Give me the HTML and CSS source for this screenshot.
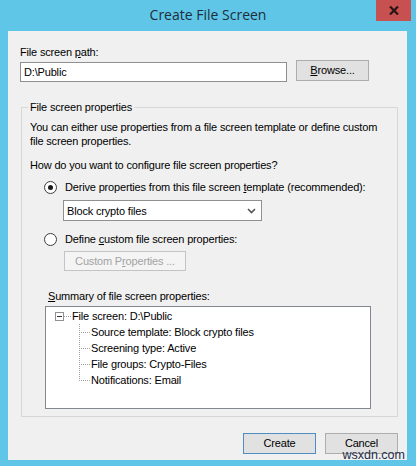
FILE: index.html
```html
<!DOCTYPE html>
<html>
<head>
<meta charset="utf-8">
<link rel="stylesheet" href="styles.css">
</head>
<body>
<div class="window">
  <div class="titlebar">
    <span></span>
    <span class="title">Create File Screen</span>
    <span class="close"><svg width="10" height="9" viewBox="0 0 10 9"><path d="M1 0.5 L9 8.5 M9 0.5 L1 8.5" stroke="#2a1515" stroke-width="2.2" fill="none"/></svg></span>
  </div>
  <div class="client">
    <div class="label">File screen <u>p</u>ath:</div>
    <div class="path-row">
      <div class="input">D:\Public</div>
      <div class="btn"><u>B</u>rowse...</div>
    </div>
    <fieldset class="group">
      <legend>File screen properties</legend>
      <div class="text">You can either use properties from a file screen template or define custom<br>file screen properties.</div>
      <div class="text question">How do you want to configure file screen properties?</div>
      <div class="radio-row first">
        <span class="radio checked"></span>
        <span>Derive properties from this file screen <u>t</u>emplate (recommended):</span>
      </div>
      <div class="combo">
        <span>Block crypto files</span>
        <svg class="chev" width="9" height="6" viewBox="0 0 9 6"><path d="M1 1 L4.5 4.5 L8 1" stroke="#555" stroke-width="1.6" fill="none"/></svg>
      </div>
      <div class="radio-row second">
        <span class="radio"></span>
        <span>Define <u>c</u>ustom file screen properties:</span>
      </div>
      <div class="btn disabled custom">Custom P<u>r</u>operties ...</div>
      <div class="label summary"><u>S</u>ummary of file screen properties:</div>
      <div class="tree">
        <div class="root">
          <span class="expander"><span class="minus"></span></span>
          <span class="root-dots"></span>
          <span>File screen: D:\Public</span>
        </div>
        <ul class="children">
          <li><span class="branch"></span><span>Source template: Block crypto files</span></li>
          <li><span class="branch"></span><span>Screening type: Active</span></li>
          <li><span class="branch"></span><span>File groups: Crypto-Files</span></li>
          <li class="last"><span class="branch"></span><span>Notifications: Email</span></li>
        </ul>
      </div>
    </fieldset>
    <div class="actions">
      <div class="btn default">Create</div>
      <div class="btn">Cancel</div>
    </div>
  </div>
  <div class="watermark">wsxdn.com</div>
</div>
</body>
</html>
```
FILE: styles.css
```css
html, body {
  margin: 0;
  padding: 0;
}
body {
  font-family: "Liberation Sans", Arial, sans-serif;
  font-size: 11px;
  letter-spacing: -0.17px;
  color: #000;
}
.window {
  position: relative;
  width: 416px;
  height: 466px;
  background: #5fc6e8;
  display: flex;
  flex-direction: column;
  box-sizing: border-box;
  overflow: hidden;
}
.titlebar {
  height: 31px;
  flex: none;
  display: grid;
  grid-template-columns: 1fr auto 1fr;
}
.title {
  font-family: "Open Sans", "Noto Sans", sans-serif;
  font-size: 14px;
  letter-spacing: 0;
  line-height: 30px;
  color: #1c2f3a;
}
.close {
  justify-self: end;
  align-self: start;
  margin-right: 5px;
  width: 35px;
  height: 21px;
  background: #c75050;
  display: flex;
  align-items: center;
  justify-content: center;
}
.client {
  flex: 1;
  margin: 0 9px 6px 8px;
  background: #f0f0f0;
  padding: 14px 0 0 12px;
  display: flex;
  flex-direction: column;
  align-items: flex-start;
}
.label {
  line-height: 14px;
}
.path-row {
  display: flex;
  gap: 9px;
  margin-top: 1px;
  align-items: flex-start;
}
.input {
  width: 267px;
  height: 20px;
  margin-top: 2px;
  box-sizing: border-box;
  border: 1px solid #8f9090;
  background: #fff;
  padding-left: 3px;
  line-height: 18px;
}
.btn {
  width: 73px;
  height: 21px;
  box-sizing: border-box;
  border: 1px solid #adadad;
  background: #e1e1e1;
  text-align: center;
  line-height: 19px;
}
.group {
  margin: 18px 0 0 1px;
  width: 377px;
  box-sizing: border-box;
  border: 1px solid #d7d7d7;
  padding: 6px 0 7px 8px;
  min-width: 0;
  display: flex;
  flex-direction: column;
  align-items: flex-start;
}
.group legend {
  padding: 0 2px;
  margin-left: -2px;
  line-height: 14px;
}
.text {
  line-height: 14px;
}
.question {
  margin-top: 10px;
}
.radio-row {
  display: flex;
  align-items: center;
  height: 14px;
  gap: 8px;
  margin-left: 14px;
}
.radio-row.first {
  margin-top: 8px;
}
.radio-row.second {
  margin-top: 11px;
}
.radio {
  width: 13px;
  height: 13px;
  box-sizing: border-box;
  border: 1px solid #3c3c3c;
  border-radius: 50%;
  background: #fff;
  display: flex;
  align-items: center;
  justify-content: center;
}
.radio.checked::after {
  content: "";
  width: 5px;
  height: 5px;
  border-radius: 50%;
  background: #1a1a1a;
}
.combo {
  margin: 6px 0 0 33px;
  width: 199px;
  height: 21px;
  box-sizing: border-box;
  border: 1px solid #8f9090;
  background: #fff;
  padding: 0 5px 0 3px;
  display: flex;
  align-items: center;
  justify-content: space-between;
}
.custom {
  margin: 5px 0 0 34px;
  width: 122px;
  height: 20px;
  line-height: 18px;
}
.btn.disabled {
  background: #f4f4f4;
  border-color: #c4c4c4;
  color: #a3a3a3;
}
.summary {
  margin: 18px 0 0 18px;
}
.tree {
  margin: 3px 0 0 15px;
  width: 326px;
  height: 103px;
  box-sizing: border-box;
  border: 1px solid #828790;
  background: #fff;
  padding: 1px 0 0 9px;
}
.root {
  display: flex;
  align-items: center;
  height: 16px;
}
.expander {
  width: 9px;
  height: 9px;
  box-sizing: border-box;
  border: 1px solid #919191;
  background: #fff;
  display: flex;
  align-items: center;
  justify-content: center;
}
.minus {
  width: 5px;
  height: 1px;
  background: #333;
}
.root-dots {
  width: 7px;
  height: 1px;
  margin-right: 1px;
  background: repeating-linear-gradient(90deg, #a0a0a0 0 1px, transparent 1px 2px);
}
.children {
  list-style: none;
  margin: 0 0 0 24px;
  padding: 0;
}
.children li {
  display: flex;
  height: 16px;
  line-height: 16px;
}
.branch {
  width: 11px;
  height: 16px;
  margin-right: 1px;
  box-sizing: border-box;
  background:
    repeating-linear-gradient(180deg, #a0a0a0 0 1px, transparent 1px 2px) left top / 1px 100% no-repeat,
    repeating-linear-gradient(90deg, #a0a0a0 0 1px, transparent 1px 2px) left 8px / 100% 1px no-repeat;
}
.children li.last .branch {
  background:
    repeating-linear-gradient(180deg, #a0a0a0 0 1px, transparent 1px 2px) left top / 1px 9px no-repeat,
    repeating-linear-gradient(90deg, #a0a0a0 0 1px, transparent 1px 2px) left 8px / 100% 1px no-repeat;
}
.actions {
  align-self: stretch;
  display: flex;
  justify-content: flex-end;
  gap: 9px;
  margin-top: 16px;
  padding-right: 9px;
}
.btn.default {
  border-color: #4f8dc2;
}
.watermark {
  position: absolute;
  right: 11px;
  bottom: 4px;
  font-family: "Liberation Sans", Arial, sans-serif;
  font-size: 12.5px;
  letter-spacing: 0;
  line-height: 14px;
  color: #1f2d48;
}
```
